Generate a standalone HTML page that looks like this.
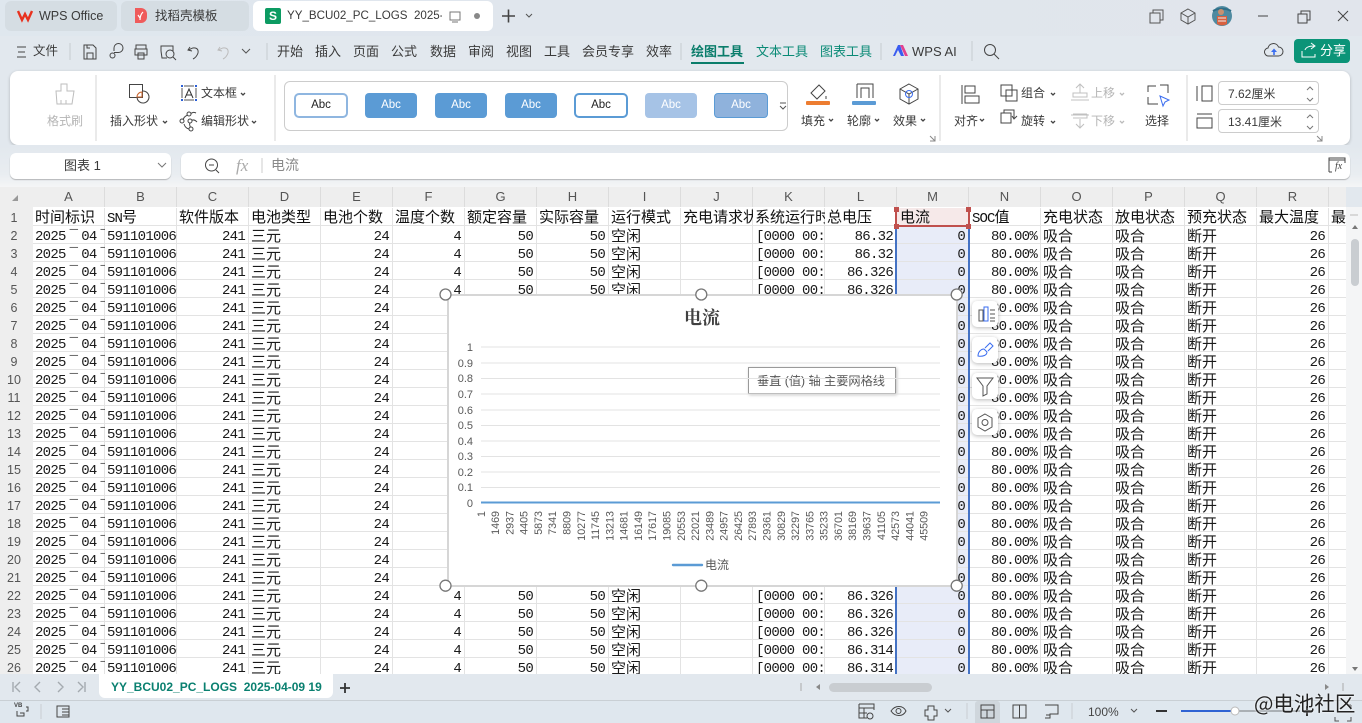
<!DOCTYPE html>
<html lang="zh"><head><meta charset="utf-8"><title>WPS</title>
<style>
html,body{margin:0;padding:0}
body{width:1362px;height:723px;overflow:hidden;position:relative;background:#e2e8ee;font-family:"Liberation Sans","Noto Sans CJK SC",sans-serif;color:#333}
div,span{box-sizing:border-box}
.t{position:absolute;white-space:nowrap;font-size:13px;line-height:16px;color:#3a3a3a}
.g{color:#b5b5b5}
.b{position:absolute}
.abc{position:absolute;top:93px;height:25px;border-radius:4px;text-align:center;font-size:11.5px;line-height:25px;color:#fff;background:#5b9bd5}
.ab2{background:#fff;color:#222;border:2px solid #5b9bd5;line-height:21px;border-radius:5px}
.hd{position:absolute;top:187px;width:72px;height:20px;font-size:13px;line-height:20px;text-align:center;color:#555;border-right:1px solid #dcdcdc}
.rn{position:absolute;left:0;width:33px;top:207px;background:#eee;height:467px;text-align:center;font-size:12.5px;line-height:18px;color:#555;padding-top:1.5px;padding-right:5px}
#grid{position:absolute;left:33px;top:207px;width:1313px;height:467px;overflow:hidden;background:#fff}
#lines{position:absolute;left:0;top:1px;width:100%;height:470px;background:repeating-linear-gradient(to right,transparent 0 71px,#e3e3e3 71px 72px),repeating-linear-gradient(to bottom,transparent 0 17px,#e3e3e3 17px 18px)}
.c{position:absolute;top:19px;width:72px;overflow:hidden;white-space:pre;line-height:18px;padding:2px 4px 0 2px;color:#1a1a1a;font-family:"Liberation Mono","WenQuanYi Zen Hei",monospace;font-size:14px;letter-spacing:-.73px}
.c i{font-style:normal;display:inline-block;width:15.5px;text-align:center}
.r{text-align:right}
.z{font-family:"WenQuanYi Zen Hei","Noto Sans CJK SC",sans-serif;font-size:15px;letter-spacing:0;padding-left:2px;padding-top:1px}
.h{position:absolute;top:0;width:72px;height:19px;overflow:hidden;white-space:pre;line-height:19px;padding-left:2px;color:#111;font-family:"WenQuanYi Zen Hei","Noto Sans CJK SC",sans-serif;font-size:15px}
.h u{text-decoration:none;font-family:"Liberation Mono",monospace;font-size:14px;letter-spacing:-.9px}
#chart{position:absolute;left:447px;top:294px;width:511px;height:293px;background:#fff;border:2px solid #d6d6d6}
.yl{position:absolute;left:450px;width:23px;text-align:right;font-size:11px;line-height:12px;color:#595959}
.fb{position:absolute;left:972px;width:26px;height:26px;background:#fff;border-radius:5px;box-shadow:0 1px 4px rgba(0,0,0,.28)}
svg{position:absolute;left:0;top:0}
</style></head><body>
<div class="b" style="left:0;top:0;width:1362px;height:36px;background:linear-gradient(90deg,#dfe7ee,#e1e5ec)"></div>
<div class="b" style="left:5px;top:1px;width:112px;height:30px;background:#d5dde3;border-radius:6px"></div>
<div class="b" style="left:121px;top:1px;width:128px;height:30px;background:#d5dde3;border-radius:6px"></div>
<div class="b" style="left:253px;top:1px;width:240px;height:30px;background:#fff;border-radius:6px"></div>
<div class="b" style="left:265px;top:8px;width:16px;height:16px;background:#0c9b62;border-radius:2px;color:#fff;font-weight:bold;font-size:12px;line-height:16px;text-align:center">S</div>
<span class="t" style="left:39px;top:8px;font-size:12.5px">WPS Office</span>
<span class="t" style="left:155px;top:8px;font-size:12.5px">找稻壳模板</span>
<span class="t" style="left:287px;top:8px;font-size:11.6px;width:155px;overflow:hidden">YY_BCU02_PC_LOGS&nbsp; 2025-04-09</span>

<span class="t" style="left:33px;top:43px;font-size:12.5px">文件</span>
<span class="t" style="left:277px;top:44px">开始</span><span class="t" style="left:315px;top:44px">插入</span><span class="t" style="left:353px;top:44px">页面</span><span class="t" style="left:391px;top:44px">公式</span><span class="t" style="left:430px;top:44px">数据</span><span class="t" style="left:468px;top:44px">审阅</span><span class="t" style="left:506px;top:44px">视图</span><span class="t" style="left:544px;top:44px">工具</span><span class="t" style="left:582px;top:44px">会员专享</span><span class="t" style="left:646px;top:44px">效率</span>
<span class="t" style="left:691px;top:44px;color:#0a7d6b;font-weight:bold">绘图工具</span><span class="t" style="left:756px;top:44px;color:#0a8a76">文本工具</span><span class="t" style="left:820px;top:44px;color:#0a8a76">图表工具</span>
<div class="b" style="left:691px;top:62px;width:53px;height:2px;background:#0a7d6b"></div>
<span class="t" style="left:912px;top:44px">WPS AI</span>
<div class="b" style="left:1294px;top:39px;width:56px;height:24px;background:#0b9478;border-radius:4px"></div>
<span class="t" style="left:1320px;top:43px;color:#fff">分享</span>

<div class="b" style="left:10px;top:71px;width:1340px;height:74px;background:#fff;border-radius:8px;box-shadow:0 1px 3px rgba(0,0,0,.22)"></div>
<div class="b" style="left:284px;top:81px;width:504px;height:50px;border:1px solid #ccc;border-radius:6px"></div>
<div class="abc ab2" style="left:294px;width:54px;border-color:#8fb6e0">Abc</div>
<div class="abc" style="left:365px;width:52px">Abc</div>
<div class="abc" style="left:435px;width:52px">Abc</div>
<div class="abc" style="left:505px;width:52px">Abc</div>
<div class="abc ab2" style="left:574px;width:54px">Abc</div>
<div class="abc" style="left:645px;width:52px;background:#a6c3e6">Abc</div>
<div class="abc" style="left:714px;width:54px;background:#8fb2dc;border:1px solid #5b9bd5;line-height:23px">Abc</div>
<span class="t g" style="left:47px;top:113px;font-size:12px">格式刷</span>
<span class="t" style="left:110px;top:113px;font-size:12px">插入形状</span>
<span class="t" style="left:201px;top:85px;font-size:12px">文本框</span>
<span class="t" style="left:201px;top:113px;font-size:12px">编辑形状</span>
<span class="t" style="left:801px;top:113px;font-size:12px">填充</span>
<span class="t" style="left:847px;top:113px;font-size:12px">轮廓</span>
<span class="t" style="left:893px;top:113px;font-size:12px">效果</span>
<span class="t" style="left:954px;top:113px;font-size:12px">对齐</span>
<span class="t" style="left:1021px;top:85px;font-size:12px">组合</span>
<span class="t" style="left:1021px;top:113px;font-size:12px">旋转</span>
<span class="t g" style="left:1091px;top:85px;font-size:12px">上移</span>
<span class="t g" style="left:1091px;top:113px;font-size:12px">下移</span>
<span class="t" style="left:1145px;top:113px;font-size:12px">选择</span>
<div class="b" style="left:1218px;top:81px;width:101px;height:24px;border:1px solid #ccc;border-radius:4px"></div>
<div class="b" style="left:1218px;top:109px;width:101px;height:24px;border:1px solid #ccc;border-radius:4px"></div>
<span class="t" style="left:1228px;top:86px;font-size:12px">7.62厘米</span>
<span class="t" style="left:1228px;top:114px;font-size:12px">13.41厘米</span>

<div class="b" style="left:0;top:145px;width:1362px;height:42px;background:linear-gradient(#e2e8ee,#e9edf1 70%,#f4f5f6)"></div>
<div class="b" style="left:10px;top:153px;width:161px;height:26px;background:#fff;border-radius:6px;box-shadow:0 1px 1px rgba(0,0,0,.25)"></div>
<div class="b" style="left:181px;top:153px;width:1169px;height:26px;background:#fff;border-radius:6px;box-shadow:0 1px 1px rgba(0,0,0,.25)"></div>
<span class="t" style="left:64px;top:158px">图表 1</span>
<span class="t" style="left:236px;top:157px;font-family:'Liberation Serif',serif;font-style:italic;color:#aaa;font-size:17px;line-height:18px">fx</span>
<span class="t" style="left:271px;top:157px;color:#8a8a8a;font-size:14px">电流</span>
<span class="t" style="left:1335px;top:162px;font-family:'Liberation Serif',serif;font-style:italic;font-size:10px;line-height:10px;color:#444">fx</span>

<div class="b" style="left:0;top:187px;width:1346px;height:20px;background:#eee"></div>
<div class="hd" style="left:33px">A</div><div class="hd" style="left:105px">B</div><div class="hd" style="left:177px">C</div><div class="hd" style="left:249px">D</div><div class="hd" style="left:321px">E</div><div class="hd" style="left:393px">F</div><div class="hd" style="left:465px">G</div><div class="hd" style="left:537px">H</div><div class="hd" style="left:609px">I</div><div class="hd" style="left:681px">J</div><div class="hd" style="left:753px">K</div><div class="hd" style="left:825px">L</div><div class="hd" style="left:897px">M</div><div class="hd" style="left:969px">N</div><div class="hd" style="left:1041px">O</div><div class="hd" style="left:1113px">P</div><div class="hd" style="left:1185px">Q</div><div class="hd" style="left:1257px">R</div>
<div class="rn">1<br>2<br>3<br>4<br>5<br>6<br>7<br>8<br>9<br>10<br>11<br>12<br>13<br>14<br>15<br>16<br>17<br>18<br>19<br>20<br>21<br>22<br>23<br>24<br>25<br>26</div>

<div id="grid">
<div class="b" style="left:864px;top:19px;width:72px;height:450px;background:#e8ecf8"></div>
<div class="b" style="left:864px;top:1px;width:72px;height:18px;background:#f6e9e9"></div>
<div id="lines"></div>
<div class="h" style="left:0">时间标识</div><div class="h" style="left:72px"><u>SN</u>号</div><div class="h" style="left:144px">软件版本</div><div class="h" style="left:216px">电池类型</div><div class="h" style="left:288px">电池个数</div><div class="h" style="left:360px">温度个数</div><div class="h" style="left:432px">额定容量</div><div class="h" style="left:504px">实际容量</div><div class="h" style="left:576px">运行模式</div><div class="h" style="left:648px">充电请求状态</div><div class="h" style="left:720px">系统运行时间</div><div class="h" style="left:792px">总电压</div><div class="h" style="left:864px;padding-left:3px">电流</div><div class="h" style="left:936px;padding-left:3px"><u>SOC</u>值</div><div class="h" style="left:1008px">充电状态</div><div class="h" style="left:1080px">放电状态</div><div class="h" style="left:1152px">预充状态</div><div class="h" style="left:1224px">最大温度</div><div class="h" style="left:1296px">最大</div>
<div class="c" style="left:0">2025<i>¯</i>04<i>¯</i>
2025<i>¯</i>04<i>¯</i>
2025<i>¯</i>04<i>¯</i>
2025<i>¯</i>04<i>¯</i>
2025<i>¯</i>04<i>¯</i>
2025<i>¯</i>04<i>¯</i>
2025<i>¯</i>04<i>¯</i>
2025<i>¯</i>04<i>¯</i>
2025<i>¯</i>04<i>¯</i>
2025<i>¯</i>04<i>¯</i>
2025<i>¯</i>04<i>¯</i>
2025<i>¯</i>04<i>¯</i>
2025<i>¯</i>04<i>¯</i>
2025<i>¯</i>04<i>¯</i>
2025<i>¯</i>04<i>¯</i>
2025<i>¯</i>04<i>¯</i>
2025<i>¯</i>04<i>¯</i>
2025<i>¯</i>04<i>¯</i>
2025<i>¯</i>04<i>¯</i>
2025<i>¯</i>04<i>¯</i>
2025<i>¯</i>04<i>¯</i>
2025<i>¯</i>04<i>¯</i>
2025<i>¯</i>04<i>¯</i>
2025<i>¯</i>04<i>¯</i>
2025<i>¯</i>04<i>¯</i></div>
<div class="c" style="left:72px;padding-right:0">5911010060
5911010060
5911010060
5911010060
5911010060
5911010060
5911010060
5911010060
5911010060
5911010060
5911010060
5911010060
5911010060
5911010060
5911010060
5911010060
5911010060
5911010060
5911010060
5911010060
5911010060
5911010060
5911010060
5911010060
5911010060</div>
<div class="c r" style="left:144px">241
241
241
241
241
241
241
241
241
241
241
241
241
241
241
241
241
241
241
241
241
241
241
241
241</div>
<div class="c z" style="left:216px">三元
三元
三元
三元
三元
三元
三元
三元
三元
三元
三元
三元
三元
三元
三元
三元
三元
三元
三元
三元
三元
三元
三元
三元
三元</div>
<div class="c r" style="left:288px">24
24
24
24
24
24
24
24
24
24
24
24
24
24
24
24
24
24
24
24
24
24
24
24
24</div>
<div class="c r" style="left:360px">4
4
4
4
4
4
4
4
4
4
4
4
4
4
4
4
4
4
4
4
4
4
4
4
4</div>
<div class="c r" style="left:432px">50
50
50
50
50
50
50
50
50
50
50
50
50
50
50
50
50
50
50
50
50
50
50
50
50</div>
<div class="c r" style="left:504px">50
50
50
50
50
50
50
50
50
50
50
50
50
50
50
50
50
50
50
50
50
50
50
50
50</div>
<div class="c z" style="left:576px">空闲
空闲
空闲
空闲
空闲
空闲
空闲
空闲
空闲
空闲
空闲
空闲
空闲
空闲
空闲
空闲
空闲
空闲
空闲
空闲
空闲
空闲
空闲
空闲
空闲</div>
<div class="c" style="left:720px;padding-left:3px;padding-right:0">[0000 00:00
[0000 00:00
[0000 00:00
[0000 00:00
[0000 00:00
[0000 00:00
[0000 00:00
[0000 00:00
[0000 00:00
[0000 00:00
[0000 00:00
[0000 00:00
[0000 00:00
[0000 00:00
[0000 00:00
[0000 00:00
[0000 00:00
[0000 00:00
[0000 00:00
[0000 00:00
[0000 00:00
[0000 00:00
[0000 00:00
[0000 00:00
[0000 00:00</div>
<div class="c r" style="left:792px">86.32
86.32
86.326
86.326
86.326
86.326
86.326
86.326
86.326
86.326
86.326
86.326
86.326
86.326
86.326
86.326
86.326
86.326
86.326
86.326
86.326
86.326
86.326
86.314
86.314</div>
<div class="c r" style="left:864px">0
0
0
0
0
0
0
0
0
0
0
0
0
0
0
0
0
0
0
0
0
0
0
0
0</div>
<div class="c r" style="left:936px">80.00%
80.00%
80.00%
80.00%
80.00%
80.00%
80.00%
80.00%
80.00%
80.00%
80.00%
80.00%
80.00%
80.00%
80.00%
80.00%
80.00%
80.00%
80.00%
80.00%
80.00%
80.00%
80.00%
80.00%
80.00%</div>
<div class="c z" style="left:1008px">吸合
吸合
吸合
吸合
吸合
吸合
吸合
吸合
吸合
吸合
吸合
吸合
吸合
吸合
吸合
吸合
吸合
吸合
吸合
吸合
吸合
吸合
吸合
吸合
吸合</div>
<div class="c z" style="left:1080px">吸合
吸合
吸合
吸合
吸合
吸合
吸合
吸合
吸合
吸合
吸合
吸合
吸合
吸合
吸合
吸合
吸合
吸合
吸合
吸合
吸合
吸合
吸合
吸合
吸合</div>
<div class="c z" style="left:1152px">断开
断开
断开
断开
断开
断开
断开
断开
断开
断开
断开
断开
断开
断开
断开
断开
断开
断开
断开
断开
断开
断开
断开
断开
断开</div>
<div class="c r" style="left:1224px">26
26
26
26
26
26
26
26
26
26
26
26
26
26
26
26
26
26
26
26
26
26
26
26
26</div>
</div>
<div class="b" style="left:1346px;top:207px;width:16px;height:467px;background:#f4f5f6"></div>
<div class="b" style="left:1351px;top:239px;width:8px;height:47px;background:#c9cdd1;border-radius:4px"></div>
<div class="b" style="left:895px;top:226px;width:2px;height:448px;background:#4472c4"></div>
<div class="b" style="left:968px;top:226px;width:2px;height:448px;background:#4472c4"></div>
<div class="b" style="left:896px;top:225px;width:73px;height:2px;background:#c0504d"></div>
<div class="b" style="left:895px;top:210px;width:2px;height:16px;background:#c0504d"></div>
<div class="b" style="left:968px;top:210px;width:2px;height:16px;background:#c0504d"></div>

<div id="chart"></div>
<div class="yl" style="top:342px">1</div><div class="yl" style="top:358px">0.9</div><div class="yl" style="top:373px">0.8</div><div class="yl" style="top:389px">0.7</div><div class="yl" style="top:405px">0.6</div><div class="yl" style="top:420px">0.5</div><div class="yl" style="top:436px">0.4</div><div class="yl" style="top:451px">0.3</div><div class="yl" style="top:467px">0.2</div><div class="yl" style="top:482px">0.1</div><div class="yl" style="top:498px">0</div>
<span class="t" style="left:684px;top:306px;font-size:18px;line-height:22px;font-weight:bold;color:#404040;font-family:'Noto Serif CJK SC',serif">电流</span>
<span class="t" style="left:705px;top:557px;font-size:12px;color:#595959">电流</span>
<div class="b" style="left:748px;top:367px;width:148px;height:27px;background:#fff;border:1px solid #9a9a9a;box-shadow:1px 1px 3px rgba(0,0,0,.25)"></div>
<span class="t" style="left:757px;top:373px;font-size:12.2px;color:#555">垂直 (值) 轴 主要网格线</span>
<div class="fb" style="top:301px"></div><div class="fb" style="top:337px"></div><div class="fb" style="top:373px"></div><div class="fb" style="top:409px"></div>

<div class="b" style="left:0;top:674px;width:1362px;height:26px;background:#e2e8ee"></div>
<div class="b" style="left:99px;top:674px;width:234px;height:24px;background:#fff;border-radius:0 0 6px 6px"></div>
<span class="t" style="left:111px;top:679px;font-size:12px;font-weight:bold;color:#0a8070">YY_BCU02_PC_LOGS&nbsp; 2025-04-09 19</span>
<div class="b" style="left:0;top:700px;width:1362px;height:23px;background:#dfe7ee;border-top:1px solid #c9cfd4"></div>
<div class="b" style="left:829px;top:683px;width:103px;height:9px;background:#c9cdd1;border-radius:5px"></div>
<div class="b" style="left:975px;top:701px;width:25px;height:22px;background:#cfd6dc;border-radius:3px 3px 0 0"></div>
<span class="t" style="left:1088px;top:704px;font-size:12px;color:#444">100%</span>
<span class="t" style="left:14px;top:703px;font-size:6px;line-height:7px;font-weight:bold;color:#444">VB</span>

<svg width="1362" height="723" viewBox="0 0 1362 723" fill="none" stroke="#444" stroke-width="1">
<!-- red handles -->
<g fill="#c0504d" stroke="none"><rect x="894" y="207" width="5" height="5"/><rect x="966" y="207" width="5" height="5"/><rect x="894" y="224" width="5" height="5"/><rect x="966" y="224" width="5" height="5"/></g>
<!-- tab logos -->
<path d="M18 11l4 9 3-6 3 6 4-9" stroke="#e8321f" stroke-width="2.4"/>
<path d="M135 8h6a6 6 0 0 1 6 6v3a6 6 0 0 1-6 6h-6z" fill="#ef5b5b" stroke="none"/>
<path d="M140 20c0-4 1-6 3-8M140 18l-2-3" stroke="#fff" stroke-width="1.2"/>
<!-- tab extras -->
<rect x="450" y="12" width="10" height="8" stroke="#777"/><path d="M452 22h6" stroke="#777"/><circle cx="477" cy="16" r="3" fill="#888" stroke="none"/>
<path d="M502 16h13M508.500 9.500v13" stroke-width="1.6"/><path d="M526 14l3 3 3-3" stroke="#555"/>
<!-- right window -->
<path d="M1150 13h10v10h-10zM1153 13v-3h10v10h-3" stroke="#555"/>
<path d="M1188 9l7 4v7l-7 4-7-4v-7zM1181 13l7 4 7-4M1188 17v7" stroke="#555"/>
<circle cx="1222" cy="16" r="10" fill="#4f8aa0" stroke="none"/><path d="M1213 11c5-3 13-3 18 0" stroke="#2f6f88" stroke-width="2"/><path d="M1217 16h10v8a9 9 0 0 1-10 0z" fill="#d8603f" stroke="none"/><circle cx="1221" cy="12" r="3" fill="#c89070" stroke="none"/><path d="M1218 18h8M1218 21h8" stroke="#eee"/>
<path d="M1258 16h10M1298 14h9v9h-9zM1301 14v-3h9v9h-3M1338 11l10 10M1348 11l-10 10"/>
<!-- menu row -->
<path d="M17 47h9M18 52h7M17 57h9"/>
<path d="M70 43v17" stroke="#c5cbd0"/><path d="M267 43v17M681 43v17M881 43v17M972 41v20" stroke="#c5cbd0"/>
<path d="M84 45h9l3 3v11H84zM87 59v-6h6v6M87 45v3h3"/>
<path d="M114 51v-3a4.500 4.500 0 1 1 4.500 4.500H114"/><circle cx="112.500" cy="55.500" r="2.500"/>
<path d="M136 49v-4h10v4M135 49h12v6h-12zM138 53h6v6h-6z"/>
<path d="M161 51v-5h12v5M161 51l1 7h5"/><circle cx="170" cy="54" r="4"/><path d="M173 57l3 3"/>
<path d="M190 47l-2 3 4 1M189 50c5-4 10-2 9 3-1 3-3 5-5 6"/>
<path d="M220 47l-2 3 4 1M219 50c5-4 10-2 9 3-1 3-3 5-5 6" stroke="#bbb"/>
<path d="M242 49l4 4 4-4" stroke="#555"/>
<path d="M893 56l5-11h2l4 11-3 0-3-6-3 6z" fill="#3a5cf0" stroke="none"/><path d="M900 45h3l5 11h-3z" fill="#e3418f" stroke="none"/>
<circle cx="990" cy="50" r="5.500"/><path d="M994 54l5 5"/>
<path d="M1270 56h-1a4 4 0 0 1-1-8 5.500 5.500 0 0 1 10.500-1 4.500 4.500 0 0 1 0 9z" stroke="#444"/><path d="M1274 55v-4" stroke="#3a6df0" stroke-width="1.6"/><path d="M1271 52l3-3.500 3 3.500z" fill="#3a6df0" stroke="none"/>
<path d="M1302 51v6h13v-3M1305 50c1-3 4-4 9-4M1311 43l4 3-4 3" stroke="#fff"/>
<!-- ribbon separators -->
<path d="M96 75v66M275 75v66M940 75v66M1187 75v66" stroke="#d4d4d4"/>
<!-- format brush -->
<path d="M61 84h6v7h7l-2 13H57l-1-13h5zM61 104v-4M66 104v-4" stroke="#bdbdbd"/>
<!-- insert shapes -->
<rect x="129.500" y="84.500" width="13" height="13"/><path d="M143 91a6 6 0 1 1-5.900 7"/><path d="M142 92v5h-5a5 5 0 0 1 5-5z" stroke="#c8622a"/>
<path d="M182 88v10M196 88v10M184 86h10M184 100h10" stroke="#555"/><path d="M185 98l4-9 4 9M186.500 95h5" stroke="#333"/><g fill="#2b5fd6" stroke="none"><rect x="181" y="85" width="2" height="2"/><rect x="195" y="85" width="2" height="2"/><rect x="181" y="99" width="2" height="2"/><rect x="195" y="99" width="2" height="2"/></g>
<path d="M163 121l2 2 2-2M241 93l2 2 2-2M252 121l2 2 2-2M829 119l2 2 2-2M875 119l2 2 2-2M921 119l2 2 2-2M980 119l2 2 2-2M1051 93l2 2 2-2M1051 121l2 2 2-2" stroke-width="1.3"/>
<path d="M1120 93l2 2 2-2M1120 121l2 2 2-2" stroke="#bbb" stroke-width="1.3"/>
<path d="M190 114c3-2 4-2 6-1M183 121c0-3 2-5 5-6M184 124c1 3 3 5 6 5M192 129c-3-3-3-6-1-8s4-1 6 1"/><g fill="#fff"><circle cx="189" cy="114" r="2"/><circle cx="182" cy="121" r="2"/><circle cx="190" cy="121" r="2"/><circle cx="191" cy="129" r="2"/></g>
<!-- style dropdown -->
<path d="M780 103h6M780 106l3 3 3-3" stroke="#555"/>
<!-- fill outline effect -->
<path d="M819 85l-8 8 6 6 8-8zM826 96v3" stroke="#444"/><rect x="806" y="101" width="24" height="4" rx="1" fill="#ed7d31" stroke="none"/>
<path d="M857 84h16v14M857 84v14M861 98V88h8v10"/><rect x="852" y="101" width="24" height="4" rx="1" fill="#5b9bd5" stroke="none"/>
<path d="M909 84l9 5v10l-9 5-9-5V89zM900 89l9 5 9-5M909 94v10"/><circle cx="909" cy="94" r="3.500" stroke="#3a6df0"/>
<path d="M930 136l5 5M935 136v5h-5M1317 136l5 5M1322 136v5h-5" stroke="#888"/>
<!-- align group -->
<path d="M962 85v19M965 86h10v7h-10zM965 96h14v7h-14z"/>
<rect x="1001" y="85" width="11" height="11"/><rect x="1006" y="90" width="11" height="11"/>
<rect x="1001" y="113" width="10" height="10"/><path d="M1004 113v-3h10v8M1012 116l2 3 3-3"/>
<path d="M1071 100h18M1073 97h14v-4h-14zM1080 93v-9M1076 88l4-4 4 4" stroke="#c0c0c0"/>
<path d="M1071 115h18M1073 118h14v-4M1080 119v9M1076 124l4 4 4-4M1073 114h14" stroke="#c0c0c0"/>
<path d="M1148 92v-6h8M1160 85h8v8M1148 97v7h10"/><path d="M1160 96l9 4-4 2-2 4z" stroke="#3a6df0"/>
<path d="M1197 86v15M1202 86h10v15h-10z"/>
<path d="M1197 114h15M1197 118h15v10h-15z"/>
<path d="M1307 90l3-3 3 3M1307 98l3 3 3-3M1307 118l3-3 3 3M1307 126l3 3 3-3" stroke="#777"/>
<!-- formula row -->
<path d="M158 163l4 4 4-4" stroke="#777"/>
<circle cx="211.500" cy="165" r="6"/><path d="M209 165h5M216 170l3 3"/>
<path d="M262 158v15" stroke="#ccc"/>
<path d="M1329 172v-14h16v5M1329 160h16M1329 172h3" stroke="#444"/>
<!-- corner triangle -->
<path d="M12 201l6-6v6z" fill="#999" stroke="none"/>
<!-- scrollbar arrows -->
<path d="M1350 215h8" stroke="#bbb"/>
<path d="M1355 225l-3 4h6zM1355 671l-3-4h6z" fill="#777" stroke="none"/>
<!-- chart grid -->
<g stroke="#e3e3e3"><path d="M481 347h459M481 363h459M481 378.500h459M481 394h459M481 410h459M481 425.500h459M481 441h459M481 456.500h459M481 472h459M481 487.500h459"/></g>
<path d="M481 502.500h459" stroke="#5b9bd5" stroke-width="2"/>
<path d="M673 565h29" stroke="#5b9bd5" stroke-width="2.400" stroke-linecap="round"/>
<g font-family="Liberation Sans" font-size="10.700" fill="#595959" stroke="none" text-anchor="end">
<text transform="translate(485 511) rotate(-90)">1</text><text transform="translate(499 511) rotate(-90)">1469</text><text transform="translate(513.500 511) rotate(-90)">2937</text><text transform="translate(527.500 511) rotate(-90)">4405</text><text transform="translate(542 511) rotate(-90)">5873</text><text transform="translate(556 511) rotate(-90)">7341</text><text transform="translate(570.500 511) rotate(-90)">8809</text><text transform="translate(585 511) rotate(-90)">10277</text><text transform="translate(599 511) rotate(-90)">11745</text><text transform="translate(613.500 511) rotate(-90)">13213</text><text transform="translate(627.500 511) rotate(-90)">14681</text><text transform="translate(642 511) rotate(-90)">16149</text><text transform="translate(656 511) rotate(-90)">17617</text><text transform="translate(670.500 511) rotate(-90)">19085</text><text transform="translate(685 511) rotate(-90)">20553</text><text transform="translate(699 511) rotate(-90)">22021</text><text transform="translate(713.500 511) rotate(-90)">23489</text><text transform="translate(727.500 511) rotate(-90)">24957</text><text transform="translate(742 511) rotate(-90)">26425</text><text transform="translate(756 511) rotate(-90)">27893</text><text transform="translate(770.500 511) rotate(-90)">29361</text><text transform="translate(785 511) rotate(-90)">30829</text><text transform="translate(799 511) rotate(-90)">32297</text><text transform="translate(813.500 511) rotate(-90)">33765</text><text transform="translate(827.500 511) rotate(-90)">35233</text><text transform="translate(842 511) rotate(-90)">36701</text><text transform="translate(856 511) rotate(-90)">38169</text><text transform="translate(870.500 511) rotate(-90)">39637</text><text transform="translate(885 511) rotate(-90)">41105</text><text transform="translate(899 511) rotate(-90)">42573</text><text transform="translate(913.500 511) rotate(-90)">44041</text><text transform="translate(927.500 511) rotate(-90)">45509</text>
</g>
<!-- handles -->
<g fill="#fff" stroke="#777" stroke-width="1.3"><circle cx="445.500" cy="294.500" r="5.500"/><circle cx="701.300" cy="294.500" r="5.500"/><circle cx="956.700" cy="294.500" r="5.500"/><circle cx="445.500" cy="585.700" r="5.500"/><circle cx="701.300" cy="585.700" r="5.500"/><circle cx="956.700" cy="585.700" r="5.500"/></g>
<!-- float icons -->
<path d="M979 310h4v11h-4zM990 310h5M990 314h5M990 318h5M990 321h5" stroke="#555"/><rect x="984" y="307" width="4" height="14" stroke="#3a6df0"/>
<path d="M978 356c0-4 3-7 6-7l3 3c0 3-4 5-9 4zM985 348l5-5 3 3-5 5" stroke="#3a6df0"/>
<path d="M977 378h16l-6 8v8l-4 2v-10z" stroke="#555"/>
<path d="M985 414l7 4v9l-7 4-7-4v-9z" stroke="#555"/><circle cx="985" cy="422.500" r="3" stroke="#555"/>
<!-- sheet nav -->
<path d="M13 682v10M20 682l-5 5 5 5M40 682l-5 5 5 5M58 682l5 5-5 5M78 682l5 5-5 5M85 682v10" stroke="#a4aaaf" stroke-width="1.400"/>
<path d="M340 688h10M345 683v10" stroke-width="1.800" stroke="#333"/>
<path d="M801 683v8M1343 683v8" stroke="#aaa"/><path d="M820 684l-4 3 4 3zM1325 684l4 3-4 3z" fill="#888" stroke="none"/>
<!-- status icons -->
<path d="M26 707h2v4h-2M17 711v5h7v-3h-4" stroke="#444"/>
<path d="M41 704v15" stroke="#c8ced3"/>
<path d="M57 706h12v11H57zM62 709h7M62 712h7M62 715h7" stroke="#444"/>
<path d="M859 704h15v6M859 704v14h8M859 708h15M864 708v10M859 713h8"/><circle cx="870" cy="716" r="3"/>
<path d="M891 711c4-6 12-6 15 0-3 6-11 6-15 0z"/><circle cx="898.500" cy="711" r="2.500"/>
<path d="M928 706h6v4h3v6h-3v4h-6v-4h-3v-6h3z"/>
<path d="M945 709l3 3 3-3M1131 709l3 3 3-3" stroke="#555"/>
<path d="M967 703v16M1072 703v16" stroke="#c8ced3"/>
<path d="M981 705h13v13h-13zM981 710h13M987 710v8"/>
<path d="M1013 705h13v13h-13zM1019.500 705v13"/>
<path d="M1045 705h13v9h-8v4h-5M1046 715h4"/>
<path d="M1156 711h11" stroke-width="2" stroke="#333"/>
<path d="M1181 711h54" stroke="#2f63d3" stroke-width="2"/><path d="M1235 711h65" stroke="#aab0b5" stroke-width="2"/>
<circle cx="1235" cy="711" r="4" fill="#fff" stroke="#bbb"/>
<path d="M1307 706v10M1302 711h10" stroke-width="2" stroke="#333"/>
<path d="M1335 717v4h4M1351 705h-4M1351 705v4M1347 721h4v-4" stroke="#555"/>
</svg>
<span class="t" style="left:1254px;top:688px;font-size:20.500px;line-height:28px;color:#222;font-family:'Noto Sans CJK SC',sans-serif;text-shadow:0 0 2px #fff">@电池社区</span>
</body></html>
